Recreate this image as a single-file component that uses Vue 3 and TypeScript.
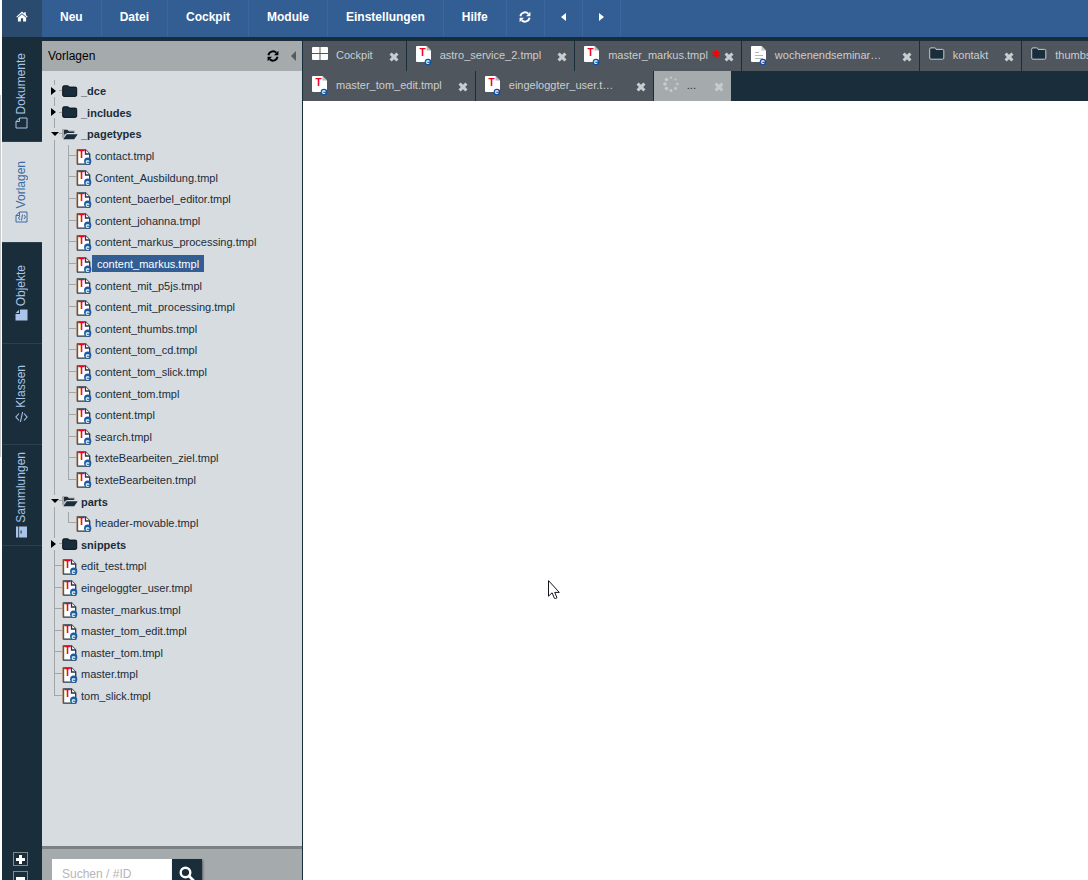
<script setup lang="ts">
interface TreeNode {
  name: string
  open?: boolean
  folder?: boolean
  selected?: boolean
  children?: TreeNode[]
}
interface Tab {
  title: string
  icon: string
  clipped?: boolean
  modified?: boolean
  loading?: boolean
}

const menu: string[] = ['Neu', 'Datei', 'Cockpit', 'Module', 'Einstellungen', 'Hilfe']

const sections = [
  { title: 'Dokumente', icon: 'page' },
  { title: 'Vorlagen', icon: 'pagecode', active: true },
  { title: 'Objekte', icon: 'pagefull' },
  { title: 'Klassen', icon: 'code' },
  { title: 'Sammlungen', icon: 'archive' },
]

const tabRows: Tab[][] = [
  [
    { title: 'Cockpit', icon: 'grid' },
    { title: 'astro_service_2.tmpl', icon: 'tabtemplate' },
    { title: 'master_markus.tmpl', icon: 'tabtemplate', modified: true },
    { title: 'wochenendseminar…', icon: 'tabdocument', clipped: true },
    { title: 'kontakt', icon: 'tabfolder' },
    { title: 'thumbs', icon: 'tabfolder' },
  ],
  [
    { title: 'master_tom_edit.tmpl', icon: 'tabtemplate' },
    { title: 'eingeloggter_user.t…', icon: 'tabtemplate', clipped: true },
    { title: '...', icon: 'spinner', loading: true },
  ],
]

const files = (...names: string[]): TreeNode[] => names.map((name) => ({ name }))

const tree: TreeNode[] = [
  { name: '_dce', folder: true },
  { name: '_includes', folder: true },
  {
    name: '_pagetypes',
    folder: true,
    open: true,
    children: [
      ...files('contact.tmpl', 'Content_Ausbildung.tmpl', 'content_baerbel_editor.tmpl', 'content_johanna.tmpl', 'content_markus_processing.tmpl'),
      { name: 'content_markus.tmpl', selected: true },
      ...files('content_mit_p5js.tmpl', 'content_mit_processing.tmpl', 'content_thumbs.tmpl', 'content_tom_cd.tmpl', 'content_tom_slick.tmpl', 'content_tom.tmpl', 'content.tmpl', 'search.tmpl', 'texteBearbeiten_ziel.tmpl', 'texteBearbeiten.tmpl'),
    ],
  },
  { name: 'parts', folder: true, open: true, children: files('header-movable.tmpl') },
  { name: 'snippets', folder: true },
  ...files('edit_test.tmpl', 'eingeloggter_user.tmpl', 'master_markus.tmpl', 'master_tom_edit.tmpl', 'master_tom.tmpl', 'master.tmpl', 'tom_slick.tmpl'),
]
</script>

<template>
  <svg class="symbols" aria-hidden="true">
    <symbol id="home" viewBox="0 0 12 11">
      <path d="M6 .6 .3 5.7l.8.9L6 2.3l4.9 4.3.8-.9-1.9-1.8V1.2H8.2v1.3z" />
      <path d="M6 3.2 1.9 6.8v3.7h3V7.3h2.2v3.2h3V6.8z" />
    </symbol>
    <symbol id="refresh" viewBox="0 0 12 12">
      <path d="M1.4 5.2A4.7 4.7 0 0 1 9.3 2.7M10.6 6.8A4.7 4.7 0 0 1 2.7 9.3" fill="none" stroke="currentColor" stroke-width="1.9" />
      <path d="M11.4.8v4.4H7zM.6 11.2V6.8H5z" />
    </symbol>
    <symbol id="left" viewBox="0 0 5 8"><path d="M5 0v8L0 4z" /></symbol>
    <symbol id="fold" viewBox="0 0 5 10"><path d="M5 0v10L0 5z" /></symbol>
    <symbol id="right" viewBox="0 0 5 8"><path d="M0 0v8l5-4z" /></symbol>
    <symbol id="down" viewBox="0 0 8 4"><path d="M0 0h8L4 4z" /></symbol>
    <symbol id="close" viewBox="0 0 10 10">
      <path d="M2.7.4 5 2.7 7.3.4l2.2 2.2L7.2 5l2.3 2.4-2.2 2.2L5 7.3 2.7 9.6.5 7.4 2.8 5 .5 2.6z" />
    </symbol>
    <symbol id="grid" viewBox="0 0 16 16">
      <path d="M1 1h6.5v6H0V2q0-1 1-1zM8.5 1H15q1 0 1 1v5H8.500zM0 8h7.5v6H1q-1 0-1-1zM8.500 8H16v5q0 1-1 1H8.500z" fill="#fff" />
    </symbol>
    <symbol id="folder" viewBox="0 0 16 16">
      <path d="M.7 3.200q0-1.400 1.400-1.400h3.600q1.300 0 1.300 1.300h6.400q1.300 0 1.300 1.300v6.700q0 1.300-1.300 1.300H2.100q-1.400 0-1.400-1.400z" fill="#1a2d3a" stroke="#07131b" />
    </symbol>
    <symbol id="folderopen" viewBox="0 0 16 16">
      <path d="M0 11V3q0-1 1-1h4l1.500 1.500H12q1 0 1 1V6H5L1.300 11z" fill="#aaa9a7" />
      <path d="M2 7.500V3h3.500L7 4.600h4.800V6H5z" fill="#1a2d3a" />
      <path d="M4.800 7.200H15.700l-3.500 5H1.200z" fill="#1a2d3a" />
    </symbol>
    <symbol id="template" viewBox="0 0 16 16">
      <path d="M1.500.8H9.600L13.700 5v10.200H1.500z" fill="#fff" stroke="#293844" stroke-width="1.300" />
      <path d="M1 .5V15" stroke="#ae7042" />
      <path d="M9.500.8V5h4.200" fill="#fff" stroke="#293844" stroke-width="1.300" />
      <text x="2.500" y="8.500" class="letter-t">T</text>
      <circle cx="11.700" cy="12.200" r="3.600" fill="#1b5aa4" />
      <text x="9.600" y="14.600" class="letter-e">e</text>
    </symbol>
    <symbol id="tabtemplate" viewBox="0 0 16 20">
      <path d="M1 0h9.500L15 4.500V16H1q-1 0-1-1V1q0-1 1-1z" fill="#fff" />
      <path d="M10.500 0v4.500H15z" fill="#b8b9b9" />
      <text x="3.500" y="9.500" class="letter-t">T</text>
      <circle cx="12" cy="16" r="3.300" fill="#0d509d" />
      <text x="9.800" y="18.400" class="letter-e">e</text>
    </symbol>
    <symbol id="tabdocument" viewBox="0 0 16 20">
      <path d="M1 0h9.500L15 4.500V16H1q-1 0-1-1V1q0-1 1-1z" fill="#fff" />
      <path d="M10.500 0v4.500H15z" fill="#c4c5c5" />
      <path d="M4 6.500h4M4 9.500h8M4 12.500h8" stroke="#b4b8ba" />
      <circle cx="12" cy="16" r="3.300" fill="#0d509d" />
      <text x="9.800" y="18.400" class="letter-e">e</text>
    </symbol>
    <symbol id="tabfolder" viewBox="0 0 16 16">
      <path d="M.7 3.200q0-1.300 1.300-1.300h3.600q1.400 0 1.400 1.500h6.500q1.300 0 1.300 1.300V12q0 1.200-1.300 1.200H2q-1.300 0-1.300-1.200z" fill="#1a2d3a" stroke="#c4ccd2" />
    </symbol>
    <symbol id="spinner" viewBox="0 0 16 16">
      <g fill="#c7cbce">
        <circle cx="8" cy="1.600" r="1.100" /><circle cx="12.500" cy="3.500" r="1.100" />
        <circle cx="14.400" cy="8" r="1.300" /><circle cx="12.500" cy="12.500" r="1.400" />
        <circle cx="8" cy="14.400" r="1.500" /><circle cx="3.500" cy="12.500" r="1.800" />
        <circle cx="1.900" cy="8" r="1.800" /><circle cx="3.500" cy="3.500" r="1.700" />
      </g>
    </symbol>
    <symbol id="page" viewBox="0 0 13 12">
      <path d="M4.500 1H12v10H1V4.500zM4.500 1v3.500H1" fill="none" stroke="currentColor" />
    </symbol>
    <symbol id="pagecode" viewBox="0 0 13 12">
      <path d="M4.500 1H12v10H1V4.500zM4.500 1v3.500H1M5 5 3.500 7 5 9M9 4l1.500 2L9 8M7.500 3.500l-1 6" fill="none" stroke="currentColor" />
    </symbol>
    <symbol id="pagefull" viewBox="0 0 13 12"><path d="M5 .5h7.500v11H.5V5H5zM4 .8V4H.7z" /></symbol>
    <symbol id="code" viewBox="0 0 13 12">
      <path d="M4 2.500.9 6 4 9.500M9 2.500 12.100 6 9 9.500M7.600 1 5.400 11" fill="none" stroke="currentColor" stroke-width="1.100" />
    </symbol>
    <symbol id="archive" viewBox="0 0 12 12"><path d="M.5.5h11v2.300H.5zM.5 3.600h11v7.900H.5z" /><path d="M4.500 5.600h3" stroke="#1a2d3a" /></symbol>
    <symbol id="search" viewBox="0 0 16 16">
      <circle cx="6.500" cy="6.500" r="4.800" fill="none" stroke="currentColor" stroke-width="2.400" />
      <path d="m10 10 4.400 4.400" stroke="currentColor" stroke-width="2.800" stroke-linecap="round" />
    </symbol>
    <symbol id="plus" viewBox="0 0 9 9"><path d="M3 0h3v3h3v3H6v3H3V6H0V3h3z" /></symbol>
    <symbol id="minus" viewBox="0 0 9 9"><path d="M0 3h9v3H0z" /></symbol>
  </svg>

  <div class="app">
    <div class="edge"></div>
    <div class="shell">
      <nav class="menubar">
        <button class="home" aria-label="Start"><svg width="12" height="11"><use href="#home" /></svg></button>
        <button v-for="item in menu" :key="item" class="menu-item">{{ item }}</button>
        <button class="menu-icon" aria-label="Neu laden"><svg width="12" height="12"><use href="#refresh" /></svg></button>
        <button class="menu-icon" aria-label="Zurück"><svg width="5" height="8"><use href="#left" /></svg></button>
        <button class="menu-icon" aria-label="Vor"><svg width="5" height="8"><use href="#right" /></svg></button>
      </nav>

      <div class="body">
        <aside class="rail">
          <button v-for="s in sections" :key="s.title" class="section" :class="{ active: s.active }">
            <span class="section-icon"><svg width="13" height="12" :class="{ turned: s.icon === 'archive' }"><use :href="'#' + s.icon" /></svg></span>
            <span class="section-label">{{ s.title }}</span>
          </button>
          <div class="resize">
            <button aria-label="Breiter"><svg width="9" height="9"><use href="#plus" /></svg></button>
            <button aria-label="Schmaler"><svg width="9" height="9"><use href="#minus" /></svg></button>
          </div>
        </aside>

        <section class="panel">
          <header class="panel-head">
            <span class="panel-title">Vorlagen</span>
            <button aria-label="Aktualisieren"><svg width="12" height="12"><use href="#refresh" /></svg></button>
            <button class="collapse" aria-label="Einklappen"><svg width="5" height="10"><use href="#fold" /></svg></button>
          </header>
          <div class="tree-area">
            <ul class="tree">
              <li v-for="node in tree" :key="node.name">
                <div class="row" :class="{ folder: node.folder }">
                  <span class="twig">
                    <button v-if="node.folder" class="toggle" :aria-label="node.name">
                      <svg v-if="node.open" width="8" height="4"><use href="#down" /></svg>
                      <svg v-else width="5" height="8"><use href="#right" /></svg>
                    </button>
                  </span>
                  <svg width="16" height="16" class="node-icon">
                    <use :href="node.folder ? (node.open ? '#folderopen' : '#folder') : '#template'" />
                  </svg>
                  <a href="#" class="label">{{ node.name }}</a>
                </div>
                <ul v-if="node.children" class="nested">
                  <li v-for="child in node.children" :key="child.name">
                    <div class="row">
                      <span class="twig"></span>
                      <svg width="16" height="16" class="node-icon"><use href="#template" /></svg>
                      <a href="#" class="label" :class="{ selected: child.selected }">{{ child.name }}</a>
                    </div>
                  </li>
                </ul>
              </li>
            </ul>
          </div>
          <form class="search" @submit.prevent>
            <input type="text" placeholder="Suchen / #ID" aria-label="Suchen / #ID" />
            <button aria-label="Suchen"><svg width="16" height="16"><use href="#search" /></svg></button>
          </form>
        </section>

        <main class="editor">
          <div v-for="(row, i) in tabRows" :key="i" class="tab-row">
            <div v-for="tab in row" :key="tab.title" class="tab" :class="{ loading: tab.loading }">
              <svg width="16" height="20" class="tab-icon"><use :href="'#' + tab.icon" :height="tab.icon.startsWith('tabt') || tab.icon.startsWith('tabd') ? 20 : 16" width="16" /></svg>
              <a href="#" class="tab-title" :class="{ clipped: tab.clipped }">{{ tab.title }}</a>
              <span class="status">
                <svg v-if="tab.modified" width="8" height="8" viewBox="0 0 8 8">
                  <path d="M4 0v8M.5 2l7 4M7.5 2l-7 4" stroke="#f00" stroke-width="2" />
                </svg>
              </span>
              <button class="close" :aria-label="tab.title + ' schließen'"><svg width="10" height="10"><use href="#close" /></svg></button>
            </div>
          </div>
          <div class="content"></div>
        </main>
      </div>
    </div>

    <svg class="pointer" width="12" height="20" viewBox="0 0 12 20">
      <path d="M.5.6v15.6l3.6-3.4 2.3 5.5q1 .7 2.6-.5l-2.3-5.4h4.6z" fill="#fff" stroke="#14141c" />
    </svg>
  </div>
</template>

<style>
body {
  margin: 0;
  overflow: hidden;
}
</style>

<style scoped>
.app {
  display: flex;
  height: 100vh;
  overflow: hidden;
  background: #fff;
  font: 12px "Liberation Sans", Arial, sans-serif;
  color: #1a2d3a;
}
svg {
  display: block;
  flex: none;
  fill: currentColor;
}
.symbols {
  display: none;
}
button {
  display: flex;
  align-items: center;
  justify-content: center;
  margin: 0;
  padding: 0;
  border: 0;
  background: none;
  font: inherit;
  color: inherit;
}
a {
  color: inherit;
  text-decoration: none;
}
ul {
  margin: 0;
  padding: 0;
  list-style: none;
}
.letter-t {
  font: bold 10px "Liberation Sans", Arial, sans-serif;
  fill: #f0001c;
}
.letter-e {
  font: bold 7px "Liberation Sans", Arial, sans-serif;
  fill: #fff;
}
.edge {
  flex: none;
  width: 1px;
  margin-right: 1px;
  background: linear-gradient(#fff 95px, #c9c9c9 95px, #c9c9c9 457px, #fff 457px);
}
.shell {
  flex: 1;
  min-width: 0;
  display: flex;
  flex-direction: column;
  background: #1a2d3a;
}

/* menu bar */
.menubar {
  display: flex;
  flex: none;
  height: 37px;
  margin-bottom: 4px;
  background: #325e94;
  color: #fff;
  font-weight: bold;
}
.home {
  width: 40px;
  padding-bottom: 4px;
  background: #2a4a6e;
}
.menu-item,
.menu-icon {
  border-right: 1px solid #3b679e;
  padding: 0 18px 4px;
}
.menu-icon {
  width: 38px;
  padding: 0 0 4px;
}

.body {
  flex: 1;
  min-height: 0;
  display: flex;
}

/* section rail */
.rail {
  flex: none;
  width: 40px;
  display: flex;
  flex-direction: column;
  color: #a9c4e8;
}
.section {
  flex: none;
  flex-direction: column-reverse;
  gap: 3px;
  height: 101px;
  padding-right: 2px;
  border-bottom: 1px solid #2c404f;
}
.section.active {
  background: #d7dce0;
  color: #3c6aa3;
}
.section-label {
  writing-mode: vertical-rl;
  transform: rotate(180deg);
}
.turned {
  transform: rotate(-90deg);
}
.resize {
  display: flex;
  flex-direction: column;
  align-items: center;
  gap: 5px;
  height: 28px;
  margin-top: auto;
  padding-right: 3px;
  color: #fff;
}
.resize button {
  flex: none;
  box-sizing: border-box;
  width: 15px;
  height: 14px;
  border: 1px solid #85898c;
}

/* template panel */
.panel {
  flex: none;
  width: 260px;
  display: flex;
  flex-direction: column;
  background: #d7dce0;
  border-right: 1px solid #1a2d3a;
}
.panel-head {
  display: flex;
  align-items: center;
  flex: none;
  height: 30px;
  padding: 0 6px;
  background: #a5aaad;
  color: #000;
}
.panel-title {
  flex: 1;
}
.collapse {
  margin-left: 12px;
  color: #555a5d;
}
.tree-area {
  flex: 1;
  min-height: 0;
  overflow: hidden;
  padding: 9px 8px;
}
.tree li {
  background: linear-gradient(#a2a6a9, #a2a6a9) 4px 0 / 1px 100% no-repeat;
  font-size: 12px;
  line-height: 1.8;
}
.tree li:last-child {
  background-size: 1px 11px;
}
.row {
  display: flex;
  align-items: center;
  height: 1.8em;
  background: linear-gradient(#a2a6a9, #a2a6a9) 5px 10px / 7px 1px no-repeat;
}
.twig {
  flex: none;
  width: 12px;
}
.toggle {
  justify-content: flex-start;
  width: 8px;
  height: 12px;
  margin-left: 1px;
  background: #d7dce0;
  color: #000;
}
.node-icon {
  margin-top: 2px;
}
.label {
  padding: 1px 3px 0;
  font-size: 11px;
  line-height: 16px;
  white-space: nowrap;
}
.folder .label {
  font-weight: bold;
}
.label.selected {
  padding: 1px 5px 0;
  background: #325e94;
  color: #fff;
}
.nested {
  padding-left: 14px;
}
.search {
  display: flex;
  flex: none;
  height: 21px;
  padding: 10px 10px 0;
  border-top: 3px solid #7e8182;
  background: #a5aaad;
}
.search input {
  box-sizing: border-box;
  width: 120px;
  height: 30px;
  padding: 0 10px;
  border: 0;
  border-radius: 0;
  background: #fff;
  font: inherit;
  outline: 0;
}
.search input::placeholder {
  color: #b5b5b5;
}
.search button {
  width: 30px;
  height: 30px;
  background: #1a2d3a;
  color: #fff;
  box-shadow: 1px 1px 2px #5b6064;
}

/* editor */
.editor {
  flex: 1;
  min-width: 0;
  display: flex;
  flex-direction: column;
}
.tab-row {
  display: flex;
  flex: none;
  height: 30px;
  overflow: hidden;
}
.tab {
  display: flex;
  align-items: center;
  flex: none;
  box-sizing: border-box;
  padding: 0 7px 0 9px;
  border-right: 1px solid #1a2d3a;
  background: #50565d;
  color: #c9cdd0;
  font-size: 11px;
}
.tab-icon {
  margin-right: 8px;
}
.tab-title {
  padding-bottom: 2px;
  line-height: 28px;
  white-space: nowrap;
}
.tab-title.clipped {
  width: 111px;
}
.status {
  width: 16px;
  display: flex;
  justify-content: center;
  padding-bottom: 4px;
}
.close {
  padding-top: 1px;
}
.tab.loading {
  background: #a5aaad;
  color: #1a2d3a;
  border-right: 0;
}
.tab.loading .tab-title {
  min-width: 11px;
}
.tab.loading .close {
  color: #c7cbce;
}
.content {
  flex: 1;
  background: #fff;
}

.pointer {
  position: absolute;
  left: 548px;
  top: 580px;
}
</style>
